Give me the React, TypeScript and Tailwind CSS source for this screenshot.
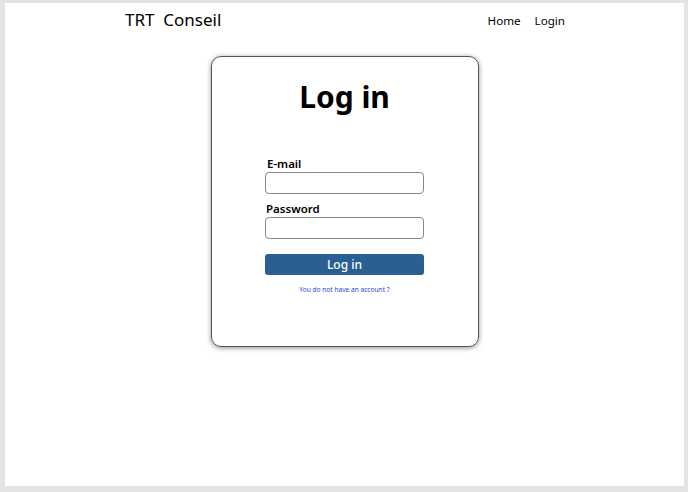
import React from "react";

export default function App() {
  return (
    <div className="h-[492px] w-[688px] bg-[#e4e4e4] pt-[3px] pl-[5px] pr-[4px] pb-[6px] font-['Noto_Sans',sans-serif] text-black">
      <div className="h-full w-full bg-white">
        <nav className="flex h-[36px] items-center">
          <div className="ml-[120px] mt-[-3px] text-[17px] leading-none">TRT&nbsp; Conseil</div>
          <div className="ml-auto mr-[119px] flex gap-[14px] text-[11.6px] leading-none">
            <a>Home</a>
            <a>Login</a>
          </div>
        </nav>
        <div className="flex justify-center pt-[17px]">
          <div className="flex h-[291px] w-[268px] flex-col items-center rounded-[10px] border border-[#555] shadow-[0_1px_5px_rgba(0,0,0,0.45)]">
            <h1 className="mt-[21px] text-[30px] font-bold leading-[38px]">Log in</h1>
            <form className="mt-[40px] flex w-[159px] flex-col">
              <label className="ml-[2px] text-[11.5px] font-semibold leading-[16px]">E-mail</label>
              <input className="h-[22px] rounded-[4px] border border-[#888]" />
              <label className="ml-[1px] mt-[7px] text-[11.5px] font-semibold leading-[16px]">Password</label>
              <input type="password" className="h-[22px] rounded-[4px] border border-[#888]" />
              <button type="button" className="mt-[15px] h-[21px] rounded-[3px] bg-[#2a5f93] text-[12px] font-medium leading-none text-white">
                Log in
              </button>
              <a className="mt-[10px] text-center text-[6.6px] leading-[10px] text-[#2449d8]">You do not have an account ?</a>
            </form>
          </div>
        </div>
      </div>
    </div>
  );
}
